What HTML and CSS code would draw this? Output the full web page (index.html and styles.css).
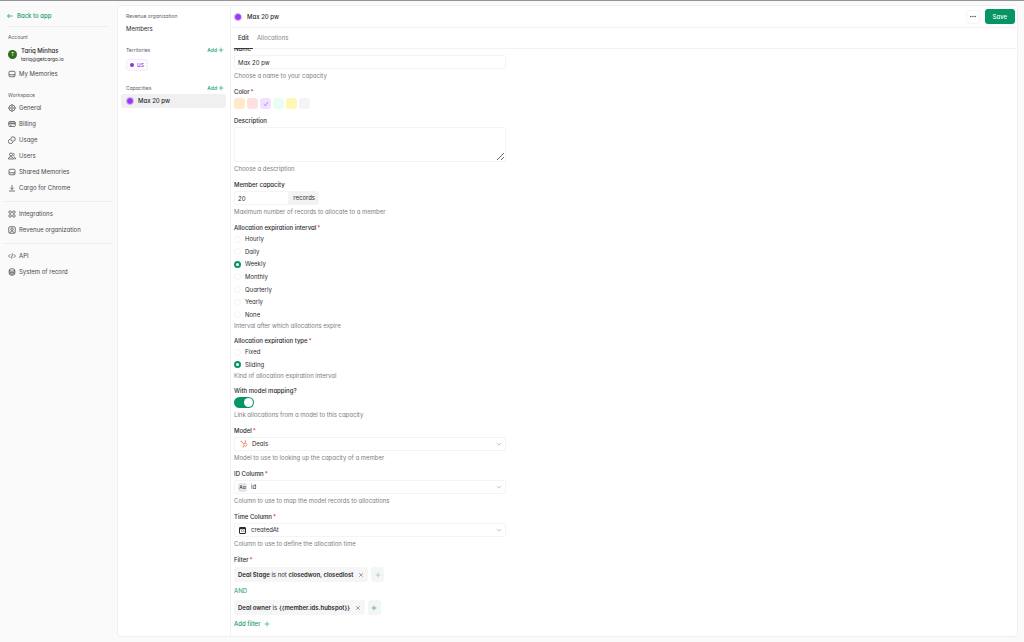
FILE: index.html
```html
<!DOCTYPE html>
<html lang="en">
<head>
  <meta charset="utf-8">
  <title>Revenue organization</title>
  <link rel="stylesheet" href="styles.css">
</head>
<body>
  <aside class="sidebar">
    <a class="back" href="#">
      <svg class="icon" viewBox="0 0 16 16"><path d="M13 8H3M7 4L3 8l4 4"/></svg>
      Back to app
    </a>
    <hr class="short">

    <h2>Account</h2>
    <div class="account">
      <span class="avatar">T</span>
      <div>
        <div class="account-name">Tariq Minhas</div>
        <div class="account-mail">tariq@getcargo.io</div>
      </div>
    </div>
    <nav>
      <a href="#"><svg class="icon" viewBox="0 0 16 16"><rect x="2" y="2.500" width="12" height="11" rx="2"/><path d="M2 9.500h12M11 11.600h1"/></svg>My Memories</a>
    </nav>

    <h2 class="workspace">Workspace</h2>
    <nav>
      <a href="#"><svg class="icon" viewBox="0 0 16 16"><circle cx="8" cy="8" r="6"/><circle cx="8" cy="8" r="2.500"/><path d="M8 0v2M8 14v2M0 8h2M14 8h2"/></svg>General</a>
      <a href="#"><svg class="icon" viewBox="0 0 16 16"><rect x="1.500" y="3" width="13" height="10" rx="2"/><path d="M1.500 6h13M1.500 7.500h13M4 10.500h3"/></svg>Billing</a>
      <a href="#"><svg class="icon" viewBox="0 0 16 16"><circle cx="10" cy="6" r="4.500"/><path d="M4 6.500A4.500 4.500 0 1 0 9.500 12"/></svg>Usage</a>
      <a href="#"><svg class="icon" viewBox="0 0 16 16"><circle cx="6" cy="5" r="3"/><path d="M1 14c0-6 10-6 10 0zM10.500 2.200a3 3 0 0 1 0 5.600M12 9.500c2 .7 3 2.500 3 4.500h-2"/></svg>Users</a>
      <a href="#"><svg class="icon" viewBox="0 0 16 16"><rect x="2" y="2.500" width="12" height="11" rx="2"/><path d="M2 9.500h12M11 11.600h1"/></svg>Shared Memories</a>
      <a href="#"><svg class="icon" viewBox="0 0 16 16"><path d="M8 2v9M4.500 7.500L8 11l3.500-3.500M2 14h12"/></svg>Cargo for Chrome</a>
    </nav>
    <hr>
    <nav>
      <a href="#"><svg class="icon" viewBox="0 0 16 16"><rect x="2" y="2" width="4.500" height="4.500" rx="1"/><rect x="9.500" y="2" width="4.500" height="4.500" rx="1"/><rect x="2" y="9.500" width="4.500" height="4.500" rx="1"/><rect x="9.500" y="9.500" width="4.500" height="4.500" rx="1"/></svg>Integrations</a>
      <a href="#"><svg class="icon" viewBox="0 0 16 16"><rect x="1.500" y="1.500" width="13" height="13" rx="2"/><circle cx="8" cy="6.500" r="2.500"/><path d="M4 14c0-5 8-5 8 0"/></svg>Revenue organization</a>
    </nav>
    <hr>
    <nav>
      <a href="#"><svg class="icon" viewBox="0 0 16 16"><path d="M4.500 4.500L1 8l3.500 3.500M11.500 4.500L15 8l-3.500 3.500M9 3L7 13"/></svg>API</a>
      <a href="#"><svg class="icon" viewBox="0 0 16 16"><ellipse cx="8" cy="4" rx="5.500" ry="2.500"/><path d="M2.500 4v8c0 3.300 11 3.300 11 0V4M2.500 7c0 3.300 11 3.300 11 0M2.500 9.700c0 3.300 11 3.300 11 0"/></svg>System of record</a>
    </nav>
  </aside>

  <div class="card">
    <section class="org">
      <h2>Revenue organization</h2>
      <a class="members" href="#">Members</a>
      <div class="org-head">
        <h2>Territories</h2>
        <button class="add">Add <svg class="plus" viewBox="0 0 10 10"><path d="M5 1v8M1 5h8"/></svg></button>
      </div>
      <a class="tag" href="#"><span class="tag-dot"></span>US</a>
      <div class="org-head">
        <h2>Capacities</h2>
        <button class="add">Add <svg class="plus" viewBox="0 0 10 10"><path d="M5 1v8M1 5h8"/></svg></button>
      </div>
      <a class="capacity" href="#"><span class="dot"></span>Max 20 pw</a>
    </section>

    <main>
      <header>
        <span class="dot"></span>
        <h1>Max 20 pw</h1>
        <button class="more" aria-label="More"><svg viewBox="0 0 10 4"><circle cx="2" cy="2" r="1"/><circle cx="5" cy="2" r="1"/><circle cx="8" cy="2" r="1"/></svg></button>
        <button class="save">Save</button>
      </header>
      <div class="tabs">
        <a class="active" href="#">Edit</a>
        <a href="#">Allocations</a>
      </div>

      <div class="scroll">
        <form>
          <div class="field">
            <label for="name">Name<b>*</b></label>
            <input class="control" id="name" type="text" value="Max 20 pw">
            <p>Choose a name to your capacity</p>
          </div>

          <fieldset class="field">
            <legend>Color<b>*</b></legend>
            <div class="colors">
              <input class="orange" type="radio" name="color" aria-label="Orange">
              <input class="red" type="radio" name="color" aria-label="Red">
              <label class="swatch"><input class="purple" type="radio" name="color" aria-label="Purple" checked><svg viewBox="0 0 10 10"><path d="M2 5.500L4 8l4-6"/></svg></label>
              <input class="green" type="radio" name="color" aria-label="Green">
              <input class="yellow" type="radio" name="color" aria-label="Yellow">
              <input class="grey" type="radio" name="color" aria-label="Grey">
            </div>
          </fieldset>

          <div class="field">
            <label for="description">Description</label>
            <textarea class="control" id="description"></textarea>
            <p>Choose a description</p>
          </div>

          <div class="field">
            <label for="member">Member capacity</label>
            <div class="group">
              <input class="control" id="member" type="text" value="20">
              <span>records</span>
            </div>
            <p>Maximum number of records to allocate to a member</p>
          </div>

          <fieldset class="field tight">
            <legend>Allocation expiration interval<b>*</b></legend>
            <div class="radios interval">
              <label><input type="radio" name="interval">Hourly</label>
              <label><input type="radio" name="interval">Daily</label>
              <label><input type="radio" name="interval" checked>Weekly</label>
              <label><input type="radio" name="interval">Monthly</label>
              <label><input type="radio" name="interval">Quarterly</label>
              <label><input type="radio" name="interval">Yearly</label>
              <label><input type="radio" name="interval">None</label>
            </div>
            <p>Interval after which allocations expire</p>
          </fieldset>

          <fieldset class="field tight">
            <legend>Allocation expiration type<b>*</b></legend>
            <div class="radios type">
              <label><input type="radio" name="type">Fixed</label>
              <label><input type="radio" name="type" checked>Sliding</label>
            </div>
            <p>Kind of allocation expiration interval</p>
          </fieldset>

          <div class="field">
            <label for="mapping">With model mapping?</label>
            <input class="switch" id="mapping" type="checkbox" checked>
            <p>Link allocations from a model to this capacity</p>
          </div>

          <div class="field">
            <label for="model">Model<b>*</b></label>
            <div class="control select model">
              <svg class="hubspot" viewBox="0 0 16 16"><circle cx="10.500" cy="9.500" r="3"/><path d="M10.500 6.500V3M8 7.500L2.500 3M8.300 11.700L6 14"/><circle class="fill" cx="10.500" cy="2.500" r="1.300"/><circle class="fill" cx="2.500" cy="3" r="1.300"/><circle class="fill" cx="6" cy="14" r="1"/></svg>
              <select id="model"><option>Deals</option></select>
              <svg class="chevron" viewBox="0 0 10 10"><path d="M1.500 3.500L5 7l3.500-3.500"/></svg>
            </div>
            <p>Model to use to looking up the capacity of a member</p>
          </div>

          <div class="field">
            <label for="idcolumn">ID Column<b>*</b></label>
            <div class="control select">
              <span class="aa">Aa</span>
              <select id="idcolumn"><option>id</option></select>
              <svg class="chevron" viewBox="0 0 10 10"><path d="M1.500 3.500L5 7l3.500-3.500"/></svg>
            </div>
            <p>Column to use to map the model records to allocations</p>
          </div>

          <div class="field">
            <label for="timecolumn">Time Column<b>*</b></label>
            <div class="control select">
              <svg class="calendar" viewBox="0 0 18 18"><rect x="3" y="3" width="12" height="12" rx="1"/><path d="M3 5h12" stroke-width="3"/><path d="M6 9.500h2v3M10 9.500h2v3" stroke-width="1"/></svg>
              <select id="timecolumn"><option>createdAt</option></select>
              <svg class="chevron" viewBox="0 0 10 10"><path d="M1.500 3.500L5 7l3.500-3.500"/></svg>
            </div>
            <p>Column to use to define the allocation time</p>
          </div>

          <fieldset class="field">
            <legend>Filter<b>*</b></legend>
            <div class="filters">
              <div class="filter">
                <div class="chip">
                  <span><strong>Deal Stage</strong> is not <strong>closedwon, closedlost</strong></span>
                  <button type="button" aria-label="Remove"><svg viewBox="0 0 10 10"><path d="M2 2l6 6M8 2L2 8"/></svg></button>
                </div>
                <button class="chip-add faded" type="button" aria-label="Add"><svg class="plus" viewBox="0 0 10 10"><path d="M5 1v8M1 5h8"/></svg></button>
              </div>
              <span class="and">AND</span>
              <div class="filter">
                <div class="chip">
                  <span><strong>Deal owner</strong> is <strong>{{member.ids.hubspot}}</strong></span>
                  <button type="button" aria-label="Remove"><svg viewBox="0 0 10 10"><path d="M2 2l6 6M8 2L2 8"/></svg></button>
                </div>
                <button class="chip-add" type="button" aria-label="Add"><svg class="plus" viewBox="0 0 10 10"><path d="M5 1v8M1 5h8"/></svg></button>
              </div>
              <button class="add-filter" type="button">Add filter <svg class="plus" viewBox="0 0 10 10"><path d="M5 1v8M1 5h8"/></svg></button>
            </div>
          </fieldset>
        </form>
      </div>
    </main>
  </div>
</body>
</html>
```
FILE: styles.css
```css
* {
  box-sizing: border-box;
}

body {
  margin: 0;
  height: 100vh;
  display: flex;
  overflow: hidden;
  border-top: 1px solid #96949a;
  background: #fafafa;
  color: #2b2b2f;
  font-family: Inter, sans-serif;
  font-feature-settings: "cv11";
  font-size: 6px;
  line-height: 10px;
}

a {
  color: inherit;
  text-decoration: none;
}

h1, h2, p {
  margin: 0;
}

h2 {
  color: #606066;
  font-size: 5px;
  font-weight: 400;
}

button, input, select, textarea {
  margin: 0;
  padding: 0;
  border: 0;
  background: none;
  color: inherit;
  font: inherit;
  font-feature-settings: inherit;
}

svg {
  flex: none;
  fill: none;
  stroke: currentColor;
}

.icon {
  width: 8px;
  height: 8px;
  stroke-width: 1.5;
}

.plus {
  width: 6px;
  height: 6px;
}

/* Sidebar */
.sidebar {
  flex: none;
  width: 117px;
  padding: 10px 4px 0;
}

.sidebar h2, .sidebar nav, .account {
  padding: 0 4px;
}

.back {
  display: flex;
  align-items: center;
  gap: 3px;
  padding: 0 2px;
  color: #139a68;
  font-weight: 500;
}

hr {
  margin: 5px 0 4px;
  border: 0;
  border-top: 1px solid #ededee;
}

hr.short {
  margin: 5px 4px;
}

.account {
  display: flex;
  align-items: center;
  gap: 4px;
  margin: 4px 0 3px;
}

.avatar {
  width: 9px;
  height: 9px;
  border-radius: 50%;
  background: #2f6f1c;
  color: #fff;
  font-size: 5px;
  line-height: 9px;
  text-align: center;
}

.account-name {
  font-weight: 500;
  line-height: 9px;
}

.account-mail {
  font-size: 5px;
  line-height: 8px;
}

.sidebar nav a {
  display: flex;
  align-items: center;
  gap: 3px;
  height: 16px;
  color: #48484d;
}

.workspace {
  margin: 8px 0 0;
}

/* Card */
.card {
  flex: 1;
  display: flex;
  min-width: 0;
  margin: 4px 6px 5px 0;
  border: 1px solid #f0f0f1;
  border-radius: 4px;
  background: #fff;
}

.org {
  flex: none;
  width: 113px;
  padding: 5px 4px 5px 3px;
  border-right: 1px solid #f0f0f1;
}

.org h2 {
  padding-left: 5px;
}

.members {
  display: block;
  padding: 3px 5px 11px;
}

.org-head {
  display: flex;
  justify-content: space-between;
  padding-right: 2px;
}

.add {
  display: flex;
  align-items: center;
  gap: 1px;
  color: #139a68;
  font-size: 5px;
  font-weight: 500;
}

.tag {
  display: flex;
  align-items: center;
  gap: 3px;
  width: fit-content;
  height: 12px;
  margin: 4px 5px 12px;
  padding: 0 3px;
  border: 1px solid #f3eafd;
  border-radius: 3px;
  background: #fcfaff;
  color: #8b35d6;
  font-size: 5px;
  font-weight: 500;
}

.tag-dot {
  width: 4px;
  height: 4px;
  border-radius: 50%;
  background: #8b35d6;
}

.capacity {
  display: flex;
  align-items: center;
  gap: 4px;
  height: 14px;
  margin-top: 1px;
  padding: 0 5px;
  border-radius: 3px;
  background: #f0f0f0;
  font-weight: 500;
}

.dot {
  flex: none;
  width: 8px;
  height: 8px;
  border: 1px solid #d9b5f9;
  border-radius: 50%;
  background: #9a3bee;
}

main {
  flex: 1;
  display: flex;
  flex-direction: column;
  min-width: 0;
}

header {
  display: flex;
  align-items: center;
  gap: 5px;
  height: 22px;
  padding: 0 2px 0 3px;
  border-bottom: 1px solid #f2f2f3;
}

h1 {
  flex: 1;
  font-size: 6px;
  font-weight: 500;
}

.more {
  display: flex;
  align-items: center;
  justify-content: center;
  width: 14px;
  height: 14px;
  border: 1px solid #f4f4f5;
  border-radius: 3px;
}

.more svg {
  width: 8px;
  height: 3px;
  fill: #48484d;
  stroke: none;
}

.save {
  height: 15px;
  padding: 0 8px;
  border-radius: 3px;
  background: #079564;
  color: #fff;
  font-weight: 500;
}

.tabs {
  display: flex;
  height: 21px;
  padding: 0 3px;
  border-bottom: 1px solid #f2f2f3;
}

.tabs a {
  height: 21px;
  padding: 0 4px;
  color: #85858b;
  line-height: 20px;
}

.tabs .active {
  border-bottom: 1px solid #38383c;
  color: #2b2b2f;
  font-weight: 500;
}

.scroll {
  flex: 1;
  min-height: 0;
  overflow: hidden;
}

/* Form */
form {
  width: 35%;
  min-width: 274px;
  margin-top: -5px;
  padding-left: 3px;
}

fieldset {
  min-width: 0;
  margin: 0;
  padding: 0;
  border: 0;
}

.field {
  margin-bottom: 7px;
}

.field > label, legend {
  display: block;
  height: 10px;
  margin-bottom: 1px;
  padding: 0;
  font-weight: 500;
}

.field b {
  margin-left: 1px;
  color: #dc2626;
  font-weight: 500;
}

.field p {
  margin-top: 2px;
  color: #7d7d83;
  line-height: 9px;
}

.control {
  display: block;
  width: 100%;
  height: 14px;
  padding: 0 3px;
  border: 1px solid #f4f4f5;
  border-radius: 2px;
}

textarea.control {
  height: 35px;
  resize: vertical;
}

.colors {
  display: flex;
  gap: 2px;
}

.colors input {
  display: block;
  appearance: none;
  width: 11px;
  height: 11px;
  border-radius: 3px;
}

.swatch {
  display: grid;
  place-items: center;
}

.swatch input, .swatch svg {
  grid-area: 1 / 1;
}

.swatch svg {
  width: 6px;
  height: 6px;
  color: #9a3bee;
}

.orange { background: #ffebcc; }
.red { background: #fee0e0; }
.purple { background: #f0e2fe; }
.green { background: #e9fdf3; }
.yellow { background: #fef7b5; }
.grey { background: #f4f4f8; }

.group {
  display: flex;
  width: 85px;
}

.group .control {
  flex: 1;
  min-width: 0;
  border-radius: 2px 0 0 2px;
}

.group span {
  padding: 0 4px;
  border-radius: 0 3px 3px 0;
  background: #f3f3f4;
  line-height: 14px;
}

.tight {
  margin-bottom: 6px;
}

.tight legend, .tight p {
  margin: 0;
}

.radios {
  display: grid;
  grid-auto-rows: 1fr;
}

.interval {
  height: 88px;
}

.type {
  height: 25px;
}

.radios label {
  display: flex;
  align-items: center;
  gap: 4px;
}

.radios input {
  appearance: none;
  width: 7px;
  height: 7px;
  border: 1px solid #f4f4f5;
  border-radius: 50%;
}

.radios input:checked {
  border: 2px solid #079564;
}

.switch {
  display: flex;
  appearance: none;
  width: 20px;
  height: 11px;
  padding: 1px;
  border-radius: 6px;
  background: #079564;
}

.switch::before {
  content: "";
  width: 9px;
  height: 9px;
  border-radius: 50%;
  background: #fff;
}

.switch:checked::before {
  margin-left: auto;
}

.select {
  display: flex;
  align-items: center;
  gap: 4px;
}

.select select {
  flex: 1;
  appearance: none;
}

.model {
  padding-left: 5px;
}

.hubspot {
  width: 8px;
  height: 8px;
  color: #f0714f;
  stroke-width: 1.5;
}

.hubspot .fill {
  fill: currentColor;
  stroke: none;
}

.calendar {
  width: 9px;
  height: 9px;
  stroke-width: 2;
}

.aa {
  width: 9px;
  height: 9px;
  border-radius: 2px;
  background: #e6e6e8;
  font-size: 5px;
  line-height: 9px;
  text-align: center;
}

.chevron {
  width: 6px;
  height: 6px;
  color: #96969c;
}

.filters {
  display: flex;
  flex-direction: column;
  align-items: flex-start;
  gap: 4px;
  padding-top: 1px;
}

.filter {
  display: flex;
  gap: 3px;
}

.chip {
  display: flex;
  align-items: center;
  gap: 5px;
  height: 15px;
  padding: 0 4px;
  border-radius: 3px;
  background: #f6f6f6;
}

.chip strong {
  font-weight: 600;
}

.chip button {
  display: flex;
  color: #66666b;
}

.chip button svg {
  width: 6px;
  height: 6px;
}

.chip-add {
  display: flex;
  align-items: center;
  justify-content: center;
  width: 13px;
  height: 15px;
  border-radius: 3px;
  background: #f3f6f5;
  color: #139a68;
}

.faded .plus {
  opacity: 0.5;
}

.and {
  color: #139a68;
}

.add-filter {
  display: flex;
  align-items: center;
  gap: 4px;
  color: #139a68;
  font-weight: 500;
}
```
